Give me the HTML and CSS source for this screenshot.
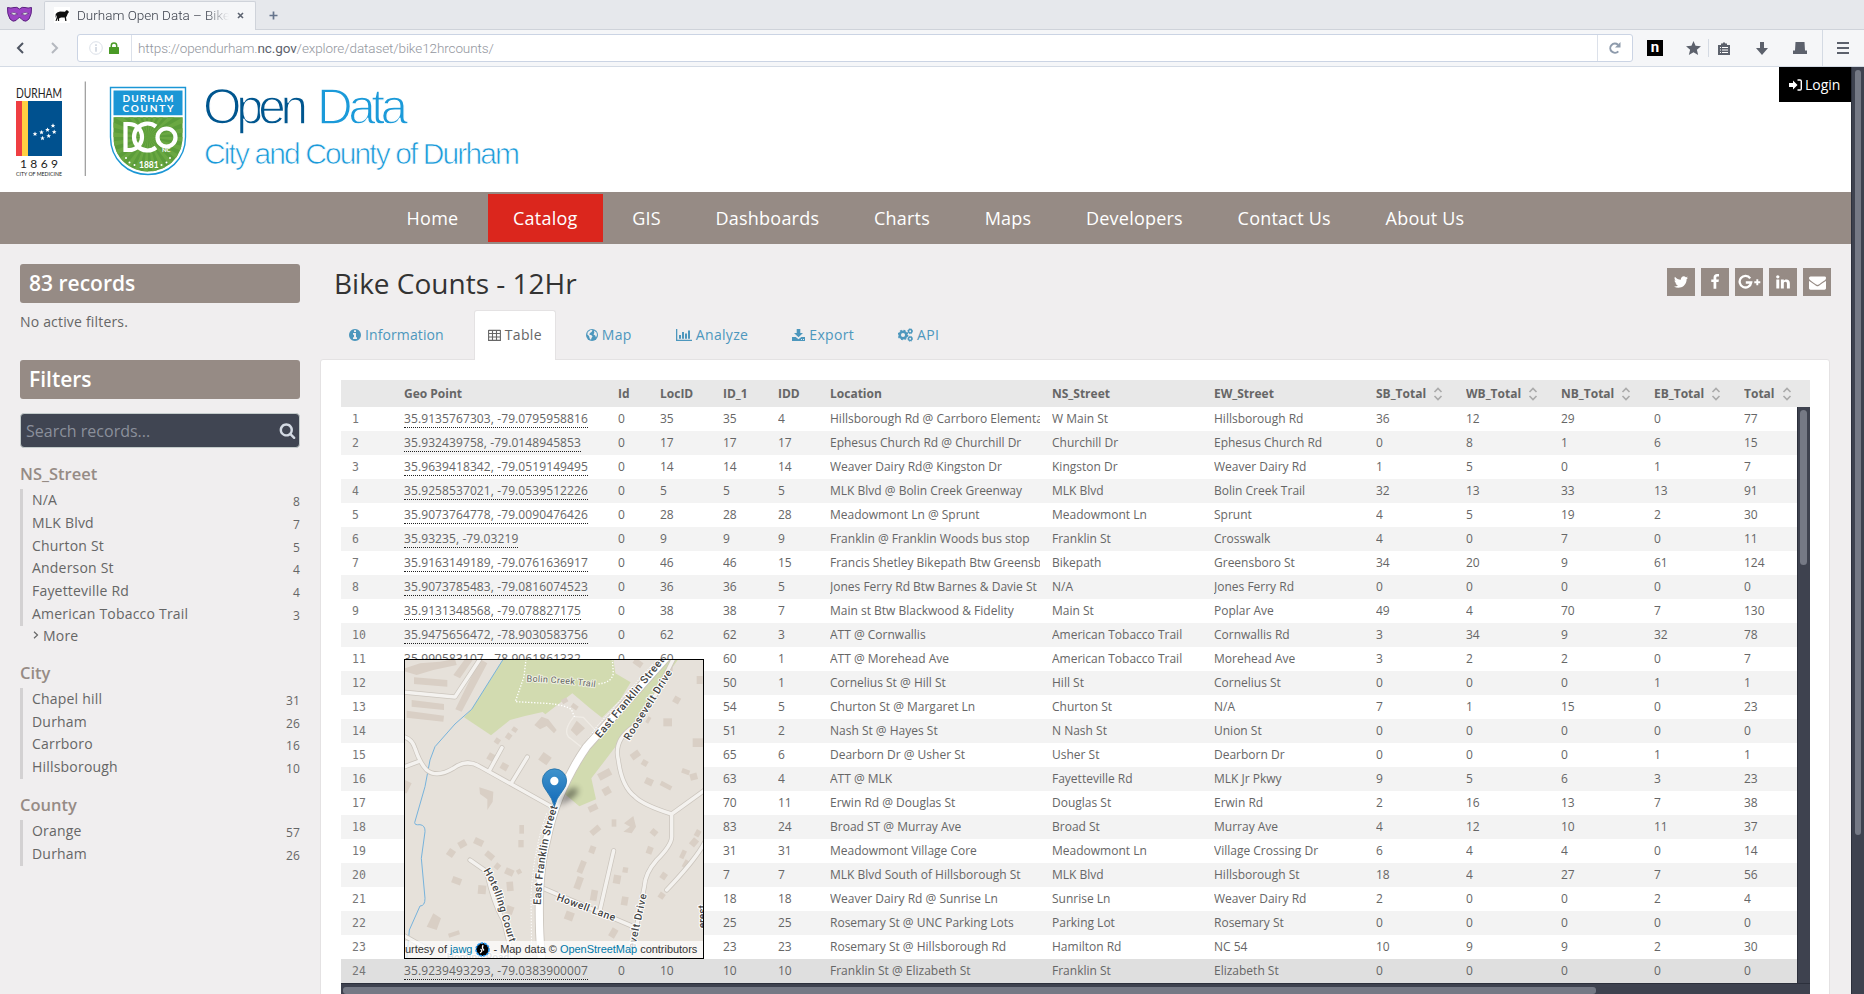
FILE: index.html
```html
<!DOCTYPE html>
<html lang="en">
<head>
<meta charset="utf-8">
<title>Durham Open Data — Bike Counts</title>
<link rel="stylesheet" href="styles.css">
</head>
<body>
<div class="tabbar">
  <svg class="mask" viewBox="0 0 25 17" width="25" height="17"><path d="M0.5 1.500Q4 2.500 7 1.500Q10 .5 12.500 3Q15 .5 18 1.500Q21 2.500 24.500 1.500Q25 8 22 13Q19 16.500 16 14.500Q13.500 11.500 12.500 11.500Q11.500 11.500 9 14.500Q6 16.500 3 13Q0 8 .5 1.500Z" fill="#9c44c4" stroke="#5b2180"/><path d="M3.500 7.500Q7 5 10.500 8Q7 10.500 3.500 7.500ZM21.500 7.500Q18 5 14.500 8Q18 10.500 21.500 7.500Z" fill="#e6e8ec" stroke="#4a1a6a" stroke-width=".6"/></svg>
  <div class="tab">
    <svg class="bull" viewBox="0 0 16 16" width="16" height="16"><rect width="16" height="16" fill="#fff"/><path d="M3.200 5.500L6 4.500L11 4.700L12.200 3.200L13.700 3.600L15 5L13.800 6.500L12.800 9L12 10.300L12.500 14H11.200L10.700 10.500H7L5 11.500L5.200 14H4L3.600 11.200L2.600 14H1.500L2.800 10L2.600 8L1.500 11L1.700 7Z" fill="#111"/></svg>
    <span class="tab-title">Durham Open Data – Bike C</span>
    <svg viewBox="0 0 7 7" width="7" height="7"><path d="M1 1L6 6M6 1L1 6" stroke="#5c6370" stroke-width="1.600"/></svg>
  </div>
  <svg class="newtab" viewBox="0 0 9 9" width="9" height="9"><path d="M4.500 .5V8.500M.5 4.500H8.500" stroke="#65748c" stroke-width="1.700"/></svg>
</div>
<div class="toolbar">
  <svg class="back" viewBox="0 0 8 12" width="8" height="12"><path d="M7 1L2 6L7 11" fill="none" stroke="#4f5663" stroke-width="2"/></svg>
  <svg class="fwd" viewBox="0 0 8 12" width="8" height="12"><path d="M1 1L6 6L1 11" fill="none" stroke="#b4b8bf" stroke-width="2"/></svg>
  <div class="urlbar">
    <div class="identity">
      <svg viewBox="0 0 14 14" width="14" height="14"><circle cx="7" cy="7" r="6.300" fill="none" stroke="#dbe0e8"/><path d="M7 3.200V5M7 6V10.800" stroke="#cfd5df" stroke-width="1.600"/></svg>
      <svg viewBox="0 0 10 12" width="10" height="12"><path d="M2.300 6V3.600A2.700 2.700 0 0 1 7.700 3.600V6" fill="none" stroke="#4a9a26" stroke-width="1.500"/><rect y="5" width="10" height="7" rx=".6" fill="#4a9a26"/></svg>
    </div>
    <div class="url">https://opendurham.<b>nc.gov</b>/explore/dataset/bike12hrcounts/</div>
    <div class="reload"><svg viewBox="0 0 12 12" width="12" height="12"><path d="M9.300 9.300A4.600 4.600 0 1 1 9 2.800" fill="none" stroke="#8e9bac" stroke-width="2"/><path d="M11.500 0V5.500H6Z" fill="#8e9bac"/></svg></div>
  </div>
  <div class="ext">n</div>
  <svg class="star" viewBox="0 0 16 15" width="15" height="14"><path d="M8 0L10.200 5.200L16 5.600L11.600 9.300L13 15L8 12L3 15L4.400 9.300L0 5.600L5.800 5.200Z" fill="#5c616c"/></svg>
  <span class="vline"></span>
  <svg class="clip" viewBox="0 0 12 13" width="12" height="13"><path d="M0 3H3V1.500H4.500L6 0L7.500 1.500H9V3H12V13H0Z" fill="#5c616c"/><path d="M2 5.500H3M4 5.500H10M2 8H3M4 8H10M2 10.500H3M4 10.500H10" stroke="#fff"/></svg>
  <svg class="down" viewBox="0 0 12 13" width="12" height="13"><path d="M4 0H8V6H12L6 13L0 6H4Z" fill="#5c616c"/></svg>
  <svg class="hat" viewBox="0 0 14 12" width="14" height="12"><path d="M2.500 0H11.500L12 8.500H14V12H0V8.500H2Z" fill="#5c616c"/></svg>
  <div class="menu"><svg viewBox="0 0 12 12" width="12" height="12"><path d="M0 1H12M0 6H12M0 11H12" stroke="#5c616c" stroke-width="1.800"/></svg></div>
</div>
<div class="viewport">
<div class="page">
  <header class="banner">
    <svg class="logos" viewBox="0 67 560 125" width="560" height="125">
      <text x="16" y="98" textLength="46" lengthAdjust="spacingAndGlyphs" class="lg city">DURHAM</text>
      <path d="M16 101H22V156H16Z" fill="#ef3e42"/><path d="M22 101H28V156H22Z" fill="#ffcf43"/><path d="M28 101H62V156H28Z" fill="#00518f"/>
      <g fill="#fff"><path id="s" d="M35 131.600L35.700 133.200L37.300 133.300L36 134.400L36.500 136L35 135.100L33.500 136L34 134.400L32.700 133.300L34.300 133.200Z"/><use href="#s" x="6.500" y="-1.700"/><use href="#s" x="12.500" y="-4.200"/><use href="#s" x="18" y="-8.300"/><use href="#s" x="19.200" y="-2"/><use href="#s" x="13.700" y="2"/><use href="#s" x="7.500" y="4.200"/></g>
      <text x="20" y="168" textLength="38" class="lg year">1869</text>
      <text x="16" y="175.500" textLength="46" lengthAdjust="spacingAndGlyphs" class="lg med">CITY OF MEDICINE</text>
      <path d="M85.300 81.500V176" stroke="#999" stroke-width="1.200"/>
      <path d="M110.500 87.500H185.500V137C185.500 160 168 174.500 148 174.500C128 174.500 110.500 160 110.500 137Z" fill="#fff" stroke="#1b96d5" stroke-width="1.400"/>
      <path d="M113.500 90.500H182.500V115.300H113.500Z" fill="#1b96d5"/>
      <clipPath id="sh"><path d="M113.500 117.300H182.500V137C182.500 158 166 171.500 148 171.500C130 171.500 113.500 158 113.500 137Z"/></clipPath>
      <g clip-path="url(#sh)"><path d="M113 117H183V172H113Z" fill="#5b9c3a"/><circle cx="148" cy="137" r="30" fill="none" stroke="#6aa842" stroke-width="60" stroke-dasharray="4 3.850"/></g>
      <text x="122.500" y="101.500" textLength="51" class="lg dc">DURHAM</text><text x="122.500" y="112" textLength="51" class="lg dc">COUNTY</text>
      <g fill="none" stroke="#fff" stroke-width="4.200"><path d="M125.500 124V150H129A13 13 0 0 0 129 124Z"/><path d="M156 126.500A13.500 13.500 0 1 0 156 147.500"/><circle cx="166.500" cy="137.500" r="9"/></g>
      <text x="162" y="152" class="lg nc">NC</text><text x="139" y="168" class="lg yr">1881</text>
      <g fill="#fff"><circle cx="126" cy="158" r="1"/><circle cx="129.500" cy="162.500" r="1"/><circle cx="134.500" cy="165" r="1"/><circle cx="170" cy="158" r="1"/><circle cx="166.500" cy="162.500" r="1"/><circle cx="161.500" cy="165" r="1"/></g>
      <text x="203" y="123.500" textLength="105" class="brand b1 navy">Open</text>
      <text x="317" y="123.500" textLength="91" class="brand b1">Data</text>
      <text x="204" y="163.500" textLength="316" class="brand b2">City and County of Durham</text>
    </svg>
    <a class="login"><svg viewBox="0 0 13 12" width="13" height="12"><path d="M0 4H4V1.500L8.500 6L4 10.500V8H0Z" fill="#fff"/><path d="M8.500 1H11A1.300 1.300 0 0 1 12.300 2.300V9.700A1.300 1.300 0 0 1 11 11H8.500" fill="none" stroke="#fff" stroke-width="1.400"/></svg>Login</a>
  </header>
  <nav class="nav"><a>Home</a><a class="on">Catalog</a><a>GIS</a><a>Dashboards</a><a>Charts</a><a>Maps</a><a>Developers</a><a>Contact Us</a><a>About Us</a></nav>
  <div class="content">
    <aside class="side">
      <h2 class="bar">83 records</h2>
      <p class="none">No active filters.</p>
      <h2 class="bar">Filters</h2>
      <div class="search"><span>Search records...</span><svg viewBox="0 0 1792 1792" width="17" height="17"><path fill="#d3dae3" d="M1216 832q0-185-131.500-316.500t-316.500-131.500-316.500 131.500-131.500 316.500 131.500 316.500 316.500 131.500 316.500-131.500 131.500-316.500zm512 832q0 52-38 90t-90 38q-54 0-90-38l-343-342q-179 124-399 124-143 0-273.500-55.500t-225-150-150-225-55.500-273.500 55.500-273.500 150-225 225-150 273.500-55.500 273.500 55.500 225 150 150 225 55.500 273.500q0 220-124 399l343 343q37 37 37 90z"/></svg></div>
      <h3>NS_Street</h3>
      <ul><li>N/A<i>8</i></li><li>MLK Blvd<i>7</i></li><li>Churton St<i>5</i></li><li>Anderson St<i>4</i></li><li>Fayetteville Rd<i>4</i></li><li>American Tobacco Trail<i>3</i></li></ul>
      <a class="more"><svg viewBox="0 0 6 8" width="6" height="8"><path d="M1 .8L4.500 4L1 7.200" fill="none" stroke="#666" stroke-width="1.200"/></svg>More</a>
      <h3>City</h3>
      <ul><li>Chapel hill<i>31</i></li><li>Durham<i>26</i></li><li>Carrboro<i>16</i></li><li>Hillsborough<i>10</i></li></ul>
      <h3>County</h3>
      <ul><li>Orange<i>57</i></li><li>Durham<i>26</i></li></ul>
    </aside>
    <main class="main">
      <div class="titlebar">
        <h1>Bike Counts - 12Hr</h1>
        <div class="share">
          <a><svg viewBox="0 0 1792 1792" width="16" height="16"><path d="M1684 408q-67 98-162 167 1 14 1 42 0 130-38 259.500t-115.500 248.500-184.500 210.500-258 146-323 54.500q-271 0-496-145 35 4 78 4 225 0 401-138-105-2-188-64.500t-114-159.500q33 5 61 5 43 0 85-11-112-23-185.500-111.500t-73.500-205.500v-4q68 38 146 41-66-44-105-115t-39-154q0-88 44-163 121 149 294.500 238.500t371.500 99.500q-8-38-8-74 0-134 94.500-228.500t228.500-94.500q140 0 236 102 109-21 205-78-37 115-142 178 93-10 186-50z"/></svg></a>
          <a><svg viewBox="0 0 1792 1792" width="16" height="16"><path d="M1343 12v264h-157q-86 0-116 36t-30 108v189h293l-39 296h-254v759h-306v-759h-255v-296h255v-218q0-186 104-288.500t277-102.500q147 0 228 12z"/></svg></a>
          <a><svg viewBox="0 0 23 16" width="23" height="16"><path d="M12.200 4.300A5.800 5.800 0 1 0 13.200 8.500H7.800" fill="none" stroke="#fff" stroke-width="2.300"/><path d="M19.300 5.200V11.200M16.300 8.200H22.300" stroke="#fff" stroke-width="1.900"/></svg></a>
          <a><svg viewBox="0 0 1792 1792" width="16" height="16"><path d="M477 625v991h-330v-991h330zm21-306q1 73-50.500 122t-135.500 49h-2q-82 0-132-49t-50-122q0-74 51.500-122.500t134.500-48.500 133 48.500 51 122.500zm1166 729v568h-329v-530q0-105-40.500-164.500t-126.500-59.500q-63 0-105.500 34.500t-63.500 85.500q-11 30-11 81v553h-329q2-399 2-647t-1-296l-1-48h329v144h-2q20-32 41-56t56.500-52 87-43.500 114.500-15.500q171 0 275 113.500t104 332.500z"/></svg></a>
          <a><svg viewBox="0 0 1792 1792" width="17" height="17"><path d="M1792 710v794q0 66-47 113t-113 47h-1472q-66 0-113-47t-47-113v-794q44 49 101 87 362 246 497 345 57 42 92.500 65.500t94.500 48 110 24.500h2q51 0 110-24.500t94.500-48 92.500-65.500q170-123 498-345 57-39 100-87zm0-294q0 79-49 151t-122 123q-376 261-468 325-10 7-42.500 31t-54 38.500-52 32.500-57.500 27-50 9h-2q-23 0-50-9t-57.500-27-52-32.500-54-38.500-42.500-31q-91-64-262-182.500t-205-142.500q-62-42-117-115.500t-55-136.500q0-78 41.500-130t118.500-52h1472q65 0 112.500 47t47.500 113z"/></svg></a>
        </div>
      </div>
      <div class="tabs">
        <a><svg viewBox="128 128 1536 1536" width="12" height="12"><path d="M1152 1376v-160q0-14-9-23t-23-9h-96v-512q0-14-9-23t-23-9h-320q-14 0-23 9t-9 23v160q0 14 9 23t23 9h96v320h-96q-14 0-23 9t-9 23v160q0 14 9 23t23 9h448q14 0 23-9t9-23zm-128-896v-160q0-14-9-23t-23-9h-192q-14 0-23 9t-9 23v160q0 14 9 23t23 9h192q14 0 23-9t9-23zm640 416q0 209-103 385.500t-279.500 279.500-385.500 103-385.500-103-279.500-279.500-103-385.500 103-385.500 279.500-279.500 385.500-103 385.500 103 279.500 279.500 103 385.500z"/></svg>Information</a>
        <a class="on"><svg viewBox="0 0 13 12" width="13" height="12"><path d="M.6 1.500H12.400V11.400H.6ZM.6 4.500H12.400M.6 8H12.400M4.500 1.500V11.400M8.500 1.500V11.400M.6 1.200H12.400" fill="none" stroke="#666" stroke-width="1.100"/></svg>Table</a>
        <a><svg viewBox="0 0 12 12" width="12" height="12"><circle cx="6" cy="6" r="6"/><path d="M5 .8L6.500 1.600L5.500 3L4 4L3.200 5.500L5.500 6.300L6.500 7.500L5.500 9L5 11L3.700 9.500L3 7L1.300 5.500L1.800 3ZM8 1.500L10.500 3.500L11 6L10 8.500L9.200 6.500L7.500 5.500L8.300 3.800Z" fill="#f0eeef"/></svg>Map</a>
        <a><svg viewBox="0 0 16 12" width="16" height="12"><path d="M0 0H1.300V10.700H16V12H0ZM3 6H5V9.700H3ZM6 3H8V9.700H6ZM9 4.500H11V9.700H9ZM12 1.500H14V9.700H12Z"/></svg>Analyze</a>
        <a><svg viewBox="0 0 13 12" width="13" height="12"><path d="M4.700 0H8.300V4H11L6.500 8.300L2 4H4.700ZM0 8H3.700L6.500 10.300L9.300 8H13V12H0Z"/><path d="M9 10.500H10M11 10.500H12" stroke="#fff" stroke-width=".8"/></svg>Export</a>
        <a><svg viewBox="0 0 15 14" width="15" height="14"><circle cx="5" cy="7" r="3.300" fill="none" stroke="#4d97bd" stroke-width="2.500"/><circle cx="5" cy="7" r="4.700" fill="none" stroke="#4d97bd" stroke-width="1.300" stroke-dasharray="1.850"/><circle cx="12.200" cy="3.200" r="1.700" fill="none" stroke="#4d97bd" stroke-width="1.500"/><circle cx="12.200" cy="3.200" r="2.500" fill="none" stroke="#4d97bd" stroke-width=".8" stroke-dasharray="1"/><circle cx="12.200" cy="10.800" r="1.700" fill="none" stroke="#4d97bd" stroke-width="1.500"/><circle cx="12.200" cy="10.800" r="2.500" fill="none" stroke="#4d97bd" stroke-width=".8" stroke-dasharray="1"/></svg>API</a>
      </div>
      <section class="panel">
        <div class="row head"><span></span><span>Geo Point</span><span>Id</span><span>LocID</span><span>ID_1</span><span>IDD</span><span>Location</span><span>NS_Street</span><span>EW_Street</span><span class="sort">SB_Total</span><span class="sort">WB_Total</span><span class="sort">NB_Total</span><span class="sort">EB_Total</span><span class="sort">Total</span></div>
        <div class="tbody"><div class="rows" id="rows"></div><div class="vbar"><span></span></div></div>
        <div class="hbar"><span></span></div>
        <div class="map">
          <svg viewBox="15 30 894 894" width="298" height="298">
            <rect x="0" y="0" width="930" height="930" fill="#e6e1da"/>
            <g fill="#d2dbb0"><path d="M310 27L215 178L192 202L273 256L330 210L375 198L428 186L436 193L517 130L570 175L606 203L660 150L692 97L646 70L640 27Z"/><path d="M835 27L700 220L574 385L588 448L538 469L480 420L580 270L720 120L800 27Z"/></g>
            <g fill="#d9cfc5" id="blds"></g>
            <path d="M0 60L60 40L120 35L165 27L170 45L100 60L50 75ZM240 27L262 40L185 185L166 178Z M195 27L220 27L180 85L160 75ZM42 82L142 90V110L42 102ZM35 150L132 162V180L35 170ZM20 182L132 197L130 215L20 203Z" fill="#d9cfc5"/>
            <path d="M403 225L425 200L445 208L470 240L462 250L440 228L420 238ZM238 412L280 425L278 455L262 480V448L240 432ZM672 520L700 498L708 530L695 550L670 545L690 530ZM80 830L100 790L123 805L110 840ZM512 240L530 212L555 235L530 258ZM15 390L35 400L20 430H0V390Z" fill="#d9cfc5"/>
            <path d="M310 27L215 178L165 222L105 290L90 330L75 410L44 518Q44 526 60 524Q76 526 75 545L64 625L75 745Q75 768 60 768L28 840L20 930" fill="none" stroke="#77b3dc" stroke-width="3"/>
            <g fill="none" stroke="#fff" stroke-width="4" stroke-dasharray="4 5"><path d="M378 27L372 80L346 155L440 160Q500 165 515 180L525 205M637 27L640 70Q635 100 590 102"/></g>
            <path d="M525 200L550 202L595 250M520 202Q490 240 505 260L545 292" fill="none" stroke="#f0ece6" stroke-width="4"/>
            <path d="M0 125L165 141L240 27M0 258Q35 262 45 295Q60 340 80 360Q110 385 160 355Q200 325 240 350L455 470M0 355L55 335M268 362L306 293M335 398L382 321M820 27L770 130L700 230Q640 270 655 330Q665 410 705 440Q730 465 815 492L915 420M815 492V560Q815 585 770 630Q735 670 733 710L700 880M915 575Q890 625 800 720M641 602L600 780M430 715L700 830M210 630L260 665Q280 760 310 810L340 930M0 850L80 895" fill="none" stroke="#cbc5bd" stroke-width="15" stroke-linecap="round" stroke-linejoin="round"/>
            <path d="M0 125L165 141L240 27M0 258Q35 262 45 295Q60 340 80 360Q110 385 160 355Q200 325 240 350L455 470M0 355L55 335M268 362L306 293M335 398L382 321M820 27L770 130L700 230Q640 270 655 330Q665 410 705 440Q730 465 815 492L915 420M815 492V560Q815 585 770 630Q735 670 733 710L700 880M915 575Q890 625 800 720M641 602L600 780M430 715L700 830M210 630L260 665Q280 760 310 810L340 930M0 850L80 895" fill="none" stroke="#f4f2ef" stroke-width="10.500" stroke-linecap="round" stroke-linejoin="round"/>
            <path d="M395 930L393 740Q400 600 440 490M480 430L520 330L590 230L760 40" fill="none" stroke="#fff" stroke-width="3" stroke-dasharray="4 5"/>
            <path d="M810 10L560 290Q470 420 440 570Q405 700 425 940" fill="none" stroke="#cbc5bd" stroke-width="27"/>
            <path d="M810 10L560 290Q470 420 440 570Q405 700 425 940" fill="none" stroke="#fff" stroke-width="22"/>
            <defs><path id="t1" d="M600 265Q690 160 810 12"/><path id="t2" d="M422 765Q430 590 480 450"/><path id="t3" d="M688 273L830 48"/><path id="t4" d="M250 662Q285 720 302 790L345 930"/><path id="t5" d="M468 750L680 828"/><path id="t6" d="M704 898L750 690"/><path id="t7" d="M380 95Q480 97 600 114"/></defs>
            <g class="maplabel"><text class="big"><textPath href="#t1" textLength="303">East Franklin Street</textPath></text><text class="big"><textPath href="#t2" textLength="300">East Franklin Street</textPath></text><text><textPath href="#t3" textLength="243">Roosevelt Drive</textPath></text><text><textPath href="#t4" textLength="230">Hotelling Court</textPath></text><text><textPath href="#t5" textLength="185">Howell Lane</textPath></text><text><textPath href="#t6" textLength="168">evelt Drive</textPath></text><text class="trail"><textPath href="#t7" textLength="207">Bolin Creek Trail</textPath></text><text x="140" y="934" class="faint">Homing Road</text><text transform="translate(917 835) rotate(-90)">erest</text></g>
            <defs><linearGradient id="pin" x2="0" y2="1"><stop stop-color="#3f93cc"/><stop offset="1" stop-color="#1269b8"/></linearGradient><filter id="soft" x="-50%" y="-50%" width="200%" height="200%"><feGaussianBlur stdDeviation="9"/></filter></defs>
            <path d="M468 468L500 425Q525 405 535 420Q530 445 468 468Z" fill="#000" opacity=".45" filter="url(#soft)"/>
            <path d="M463 470Q457 445 441 425Q427 408 427 393A36.500 36.500 0 0 1 500 393Q500 408 486 425Q469 445 463 470Z" fill="url(#pin)" stroke="#2371a8" stroke-width="2.500"/><circle cx="463" cy="393" r="12.500" fill="#fff"/>
          </svg>
          <div class="attr"><span>urtesy of <a>jawg</a></span><svg viewBox="0 0 15 15" width="15" height="15"><circle cx="7.500" cy="7.500" r="6.500" fill="#000" stroke="#2196f3" stroke-width="1.600" stroke-dasharray="2.500 1"/><path d="M5 11Q8.500 9 5.500 7M8 3Q6.500 6 9 8.500" fill="none" stroke="#fff" stroke-width="1.300"/></svg><span>- Map data © <a>OpenStreetMap</a> contributors</span></div>
        </div>
      </section>
    </main>
  </div>
</div>
<div class="pagebar"><span></span></div>
</div>
<script src="data.js"></script>
</body>
</html>
```
FILE: styles.css
```css
* { box-sizing: border-box; }
body { margin: 0; height: 994px; overflow: hidden; display: flex; flex-direction: column; font-family: "Open Sans", sans-serif; font-size: 14px; color: #666; background: #f0eeef; }
svg { display: block; flex: none; }
h1, h2, h3, p, ul { margin: 0; padding: 0; font-weight: 400; }
i { font-style: normal; }

.tabbar { flex: none; height: 30px; background: #e6e8ec; border-bottom: 1px solid #cfd3da; display: flex; align-items: flex-end; font-family: "Roboto", sans-serif; }
.mask { margin: 0 12px 6px 7px; }
.tab { height: 29px; width: 212px; margin-bottom: -1px; background: #f5f6f8; border: 1px solid #cfd3da; border-bottom: 0; border-radius: 2px 2px 0 0; display: flex; align-items: center; padding: 0 10px 2px 9px; gap: 7px; }
.tab-title { width: 152px; margin-right: 1px; overflow: hidden; white-space: nowrap; font-size: 13.500px; letter-spacing: 0; font-weight: 300; color: #3c414c; -webkit-mask-image: linear-gradient(90deg, #000 85%, transparent); mask-image: linear-gradient(90deg, #000 85%, transparent); }
.newtab { margin: 0 0 9px 13px; }
.toolbar { flex: none; height: 37px; background: #f5f6f8; border-bottom: 1px solid #d4dbe5; display: flex; align-items: center; }
.back { margin-left: 16px; }
.fwd { margin-left: 27px; }
.urlbar { margin-left: 18px; width: 1556px; height: 28px; background: #fff; border: 1px solid #cbd4e4; border-radius: 3px; display: flex; align-items: center; }
.identity { width: 54px; height: 26px; border-right: 1px solid #dce1ea; display: flex; align-items: center; gap: 6px; padding-left: 11px; }
.url { flex: 1; padding: 0 0 1px 6px; font-family: "Roboto", sans-serif; font-weight: 300; font-size: 13.500px; letter-spacing: -.1px; color: #92969e; }
.url b { font-weight: 400; color: #5c616c; }
.reload { width: 35px; height: 26px; border-left: 1px solid #dce1ea; display: flex; align-items: center; justify-content: center; }
.ext { margin-left: 14px; width: 16px; height: 16px; background: #000; color: #fff; font: 700 15px/14px "Roboto", sans-serif; text-align: center; }
.star { margin-left: 23px; }
.vline { width: 1px; height: 18px; background: #d4dae3; margin: 0 9px 0 7px; }
.down { margin-left: 26px; }
.hat { margin-left: 25px; }
.menu { margin-left: auto; width: 42px; height: 36px; border-left: 1px solid #d4dae3; display: flex; align-items: center; padding-left: 14px; }

.viewport { flex: 1; min-height: 0; display: grid; grid-template-columns: 1851px 13px; }
.page { overflow: hidden; }
.pagebar { background: #3e424f; border-left: 1px solid #2c303c; padding: 3px 2px 0 3px; }
.pagebar span { display: block; width: 6px; height: 765px; border-radius: 3px; background: #757985; }
.banner { height: 125px; background: #fff; display: flex; justify-content: space-between; align-items: flex-start; }
.login { width: 72px; height: 35px; background: #000; color: #fff; display: flex; align-items: center; gap: 3px; padding-left: 10px; font-size: 14px; }
.lg { font-family: "Lato", sans-serif; fill: #222; }
.city { font-size: 12.500px; }
.year { font-size: 12px; }
.med { font-size: 6px; }
.dc { font-size: 10px; font-weight: 700; fill: #fff; }
.nc { font-size: 6px; font-weight: 700; fill: #fff; }
.yr { font-size: 8.500px; font-weight: 700; fill: #fff; }
/* A white outline thins the regular weight to a light one */
.brand { font-family: "Liberation Sans", sans-serif; fill: #1b9ad9; stroke: #fff; }
.b1 { font-size: 49.500px; stroke-width: 1.300px; }
.b2 { font-size: 30px; stroke-width: .7px; }
.navy { fill: #00568f; }
.nav { height: 52px; background: #968b85; display: flex; justify-content: center; gap: 4.700px; padding: 2px 0 2px 20px; }
.nav a { height: 48px; line-height: 48px; padding: 0 25px; color: #fff; font-size: 18px; letter-spacing: .22px; }
.nav .on { background: #db261d; }

.content { display: grid; grid-template-columns: 320px 1510px; }
.side { padding: 20px 20px 0 20px; }
.bar { height: 39px; line-height: 39px; border-radius: 3px; background: #968b85; color: #fff; font-size: 21px; font-weight: 600; padding-left: 9px; }
.none { height: 57px; line-height: 37px; font-size: 14px; letter-spacing: .18px; }
.search { margin-top: 14px; height: 35px; border-radius: 4px; border: 1px solid #c4cccb; background: #404552; color: #8b909b; display: flex; align-items: center; justify-content: space-between; padding: 0 3px 0 5px; font-size: 16px; }
.side h3 { height: 41px; line-height: 52px; font-size: 16.500px; font-weight: 600; color: #968b85; }
.side ul { list-style: none; border-left: 3px solid #d3d1d2; padding-left: 9px; }
.side li { height: 22.800px; line-height: 22.500px; display: flex; justify-content: space-between; letter-spacing: .2px; }
.side li i { font-size: 12px; line-height: 25px; }
.more { display: flex; align-items: center; gap: 4px; height: 21px; padding: 0 0 2px 13px; letter-spacing: .2px; }

.titlebar { height: 66px; padding: 24px 0 0 14px; display: flex; justify-content: space-between; }
h1 { margin-top: -1px; font-size: 28px; line-height: 32px; color: #333; }
.share { display: flex; gap: 6px; margin-right: -1px; }
.share a { width: 28px; height: 28px; background: #968b85; display: flex; align-items: center; justify-content: center; }
.share svg { fill: #fff; }
.tabs { display: flex; gap: 16px; height: 50px; padding-left: 15px; position: relative; z-index: 1; }
.tabs a { height: 50px; padding: 0 13px 2px; border: 1px solid transparent; border-bottom: 0; display: flex; align-items: center; gap: 4px; color: #4d97bd; fill: #4d97bd; font-size: 14px; letter-spacing: .33px; }
.tabs a:first-child { letter-spacing: .1px; }
.tabs .on { background: #fff; color: #666; border-color: #e4e2e3; border-radius: 3px 3px 0 0; }
.panel { position: relative; height: 650px; margin-top: -1px; background: #fff; border: 1px solid #e4e2e3; border-radius: 3px; padding: 20px 19px 20px 20px; }
.row { display: grid; grid-template-columns: 52px 214px 42px 63px 55px 52px 222px 162px 162px 90px 95px 93px 90px 1fr; padding-left: 11px; height: 24px; line-height: 24px; font-size: 12px; white-space: nowrap; }
.row span { overflow: hidden; }
.row > :nth-child(7) { margin-right: 12px; }
.head { height: 27px; line-height: 28px; background: #e8e8e8; font-weight: 700; }
.sort { display: flex; align-items: center; gap: 7px; }
.tbody { display: grid; grid-template-columns: 1456px 13px; }
.rows .row:nth-child(even) { background: #f3f3f3; }
.rows .row:last-child { background: #dfdfdf; }
.rows .row > :first-child { font-family: "DejaVu Sans Mono", monospace; font-size: 11.500px; color: #777; }
.geo u { display: inline-block; height: 21px; text-decoration: none; border-bottom: 1px dotted #222; letter-spacing: .1px; }
.vbar { background: #3e424f; border-left: 1px solid #2c303c; padding: 3px 2px 0; }
.vbar span { display: block; width: 7px; height: 155px; border-radius: 3.500px; background: #757985; }
.hbar { height: 20px; background: #3e424f; border-top: 1px solid #2c303c; padding: 3px 2px; }
.hbar span { display: block; width: 1253px; height: 7px; border-radius: 3px; background: #757985; }

.map { position: absolute; left: 83px; top: 299px; width: 300px; height: 300px; border: 1px solid #000; overflow: hidden; }
.maplabel text { font-family: "Roboto", sans-serif; font-size: 31px; font-weight: 500; fill: #444; stroke: #fff; stroke-width: 6px; paint-order: stroke; stroke-linejoin: round; }
.maplabel .big { font-size: 32px; }
.maplabel .trail { font-size: 27px; font-weight: 400; fill: #666; stroke: #eef0e0; }
.maplabel .faint { fill: #999; }
.attr { position: absolute; right: 0; bottom: 0; width: 298px; height: 17px; background: rgba(255,255,255,.7); display: flex; align-items: center; gap: 3px; padding-bottom: 1px; font: 11px "Liberation Sans", sans-serif; letter-spacing: -.03px; color: #333; white-space: nowrap; }
.attr a { color: #0078a8; }
```
FILE: data.js
```js
var data = `35.9135767303, -79.0795958816|0|35|35|4|Hillsborough Rd @ Carrboro Elementary|W Main St|Hillsborough Rd|36|12|29|0|77
35.932439758, -79.0148945853|0|17|17|17|Ephesus Church Rd @ Churchill Dr|Churchill Dr|Ephesus Church Rd|0|8|1|6|15
35.9639418342, -79.0519149495|0|14|14|14|Weaver Dairy Rd@ Kingston Dr|Kingston Dr|Weaver Dairy Rd|1|5|0|1|7
35.9258537021, -79.0539512226|0|5|5|5|MLK Blvd @ Bolin Creek Greenway|MLK Blvd|Bolin Creek Trail|32|13|33|13|91
35.9073764778, -79.0090476426|0|28|28|28|Meadowmont Ln @ Sprunt|Meadowmont Ln|Sprunt|4|5|19|2|30
35.93235, -79.03219|0|9|9|9|Franklin @ Franklin Woods bus stop|Franklin St|Crosswalk|4|0|7|0|11
35.9163149189, -79.0761636917|0|46|46|15|Francis Shetley Bikepath Btw Greensboro|Bikepath|Greensboro St|34|20|9|61|124
35.9073785483, -79.0816074523|0|36|36|5|Jones Ferry Rd Btw Barnes & Davie St|N/A|Jones Ferry Rd|0|0|0|0|0
35.9131348568, -79.078827175|0|38|38|7|Main st Btw Blackwood & Fidelity|Main St|Poplar Ave|49|4|70|7|130
35.9475656472, -78.9030583756|0|62|62|3|ATT @ Cornwallis|American Tobacco Trail|Cornwallis Rd|3|34|9|32|78
35.990583107, -78.9061861332|0|60|60|1|ATT @ Morehead Ave|American Tobacco Trail|Morehead Ave|3|2|2|0|7
||50|50|1|Cornelius St @ Hill St|Hill St|Cornelius St|0|0|0|1|1
||54|54|5|Churton St @ Margaret Ln|Churton St|N/A|7|1|15|0|23
||51|51|2|Nash St @ Hayes St|N Nash St|Union St|0|0|0|0|0
||65|65|6|Dearborn Dr @ Usher St|Usher St|Dearborn Dr|0|0|0|1|1
||63|63|4|ATT @ MLK|Fayetteville Rd|MLK Jr Pkwy|9|5|6|3|23
||70|70|11|Erwin Rd @ Douglas St|Douglas St|Erwin Rd|2|16|13|7|38
||83|83|24|Broad ST @ Murray Ave|Broad St|Murray Ave|4|12|10|11|37
||31|31|31|Meadowmont Village Core|Meadowmont Ln|Village Crossing Dr|6|4|4|0|14
||7|7|7|MLK Blvd South of Hillsborough St|MLK Blvd|Hillsborough St|18|4|27|7|56
||18|18|18|Weaver Dairy Rd @ Sunrise Ln|Sunrise Ln|Weaver Dairy Rd|2|0|0|2|4
||25|25|25|Rosemary St @ UNC Parking Lots|Parking Lot|Rosemary St|0|0|0|0|0
||23|23|23|Rosemary St @ Hillsborough Rd|Hamilton Rd|NC 54|10|9|9|2|30
35.9239493293, -79.0383900007|0|10|10|10|Franklin St @ Elizabeth St|Franklin St|Elizabeth St|0|0|0|0|0`;

document.getElementById('rows').innerHTML = data.split('\n').map(function (line, n) {
  var cells = line.replace(/&/g, '&amp;').split('|');
  // Rows under the map popup have no visible point, id or LocID
  if (!cells[0]) cells[2] = '';
  return '<div class="row"><span>' + (n + 1) + '</span><span class="geo">' + (cells[0] ? '<u>' + cells[0] + '</u>' : '') + '</span>' +
    cells.slice(1).map(function (c) { return '<span>' + c + '</span>'; }).join('') + '</div>';
}).join('');

// Sort arrows in the sortable headings
document.querySelectorAll('.sort').forEach(function (el) {
  el.insertAdjacentHTML('beforeend', '<svg viewBox="0 0 10 14" width="10" height="14"><path d="M1.500 5L5 1.500L8.500 5M1.500 9L5 12.500L8.500 9" fill="none" stroke="#aaa" stroke-width="1.600"/></svg>');
});

// Building footprints: x, y, width, height, rotation
document.getElementById('blds').innerHTML = [
  [263,310,20,22,30],[302,340,22,20,30],[336,232,16,14,35],[318,250,16,18,35],[284,265,16,16,35],[420,312,30,28,35],[485,145,18,14,-30],[514,163,20,14,35],
  [790,205,26,24,0],[878,265,32,26,0],[692,305,28,20,-35],[725,330,18,18,30],[594,362,40,22,-28],[608,412,24,22,-30],[735,385,24,20,25],[780,400,36,14,28],[845,358,24,14,20],[870,370,22,20,-15],
  [565,465,28,18,-25],[570,532,32,18,-40],[635,508,14,22,0],[752,538,20,18,40],[568,588,18,22,20],[358,525,14,26,0],[355,570,16,22,0],[222,566,28,20,25],[175,572,24,20,-30],[142,598,22,22,35],[255,608,28,18,40],[284,640,16,18,40],[315,656,26,20,25],[350,658,14,14,-30],[156,682,28,20,20],[234,706,24,26,5],[320,695,20,28,-5],[318,768,22,24,20],
  [536,632,18,38,22],[526,680,20,38,20],[572,720,20,32,10],[668,652,16,16,10],[640,675,22,26,10],[664,740,20,26,10],[740,590,18,22,20],[782,668,18,20,35],[842,600,14,26,25],[850,630,14,24,30],[872,565,20,24,40],[885,540,16,20,30],[776,728,18,18,35],[495,785,26,26,20],[630,835,20,28,30],[145,846,34,12,-18],[806,42,12,22,0],[890,78,18,24,0],[700,30,28,18,35],[820,140,20,20,30],[740,200,10,20,30]
].map(function (b) {
  return '<rect x="' + b[0] + '" y="' + b[1] + '" width="' + b[2] + '" height="' + b[3] + '" transform="rotate(' + b[4] + ' ' + (b[0] + b[2] / 2) + ' ' + (b[1] + b[3] / 2) + ')"/>';
}).join('');
```
